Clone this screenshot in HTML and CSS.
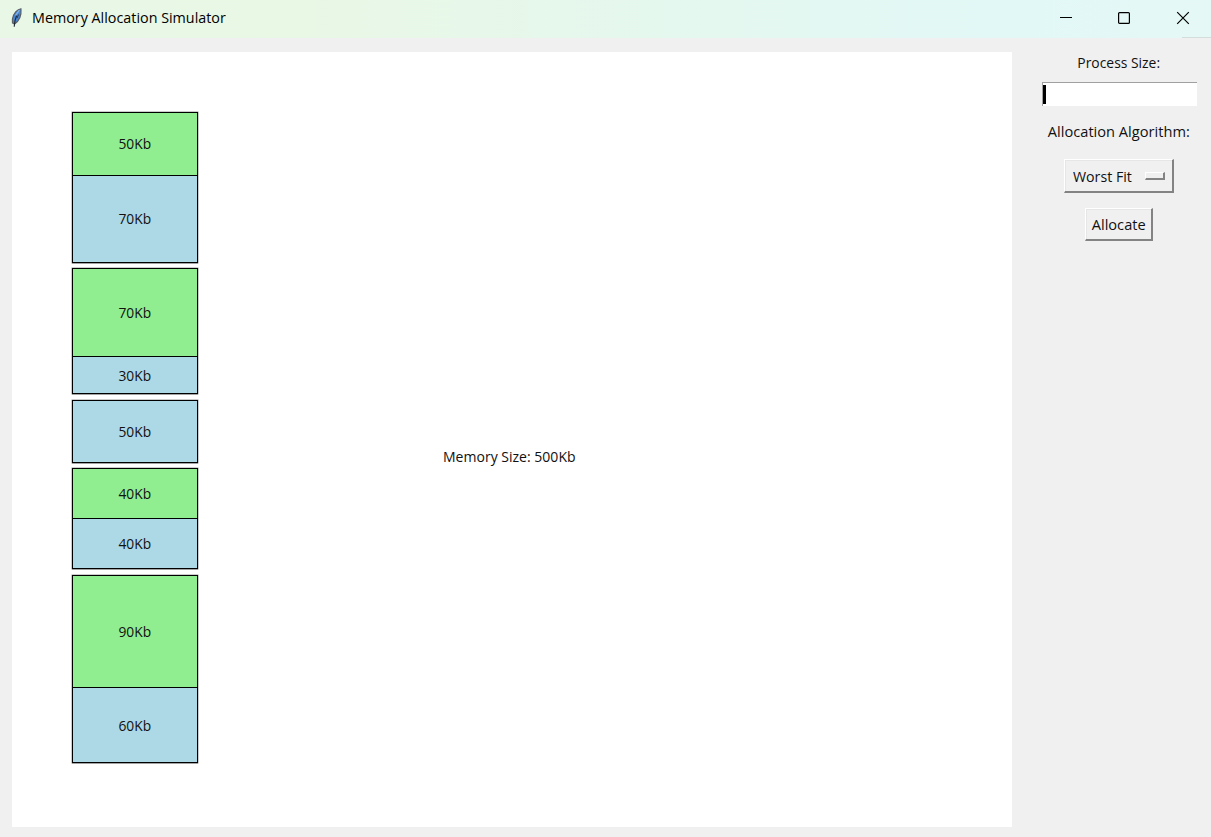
FILE: index.html
```
<!DOCTYPE html>
<html lang="en">
<head>
<meta charset="utf-8">
<title>Memory Allocation Simulator</title>
<link rel="stylesheet" href="styles.css">
</head>
<body>
<div class="window">
  <header class="titlebar">
    <svg class="feather" width="14" height="22" viewBox="0 0 14 22">
      <path d="M11 1.8 C7.5 2 3.2 6.5 2.4 12 L2.4 16 L4.6 17 C9 14 11.6 8 11 1.8Z" fill="#4585d2" stroke="#5a5f62" stroke-width="1.1"/>
      <path d="M6.6 8.5 C5.2 12 4.4 15 4.2 19.8" fill="none" stroke="#222831" stroke-width="1.1"/>
      <path d="M9.4 3.2 L5.6 8.4" fill="none" stroke="#88b4e4" stroke-width="1.2"/>
      <path d="M8.6 7.5 L7 11" fill="none" stroke="#1b3a68" stroke-width="1"/>
    </svg>
    <h1 class="title">Memory Allocation Simulator</h1>
    <div class="controls">
      <svg width="14" height="14" viewBox="0 0 14 14"><path d="M1 6.5H13" stroke="#000" fill="none"/></svg>
      <svg width="14" height="14" viewBox="0 0 14 14"><rect x="1.6" y="1.6" width="10.8" height="10.8" rx="1" stroke="#000" stroke-width="1.2" fill="none"/></svg>
      <svg class="close" width="14" height="14" viewBox="0 0 14 14"><path d="M1.2 1.2L12.8 12.8M12.8 1.2L1.2 12.8" stroke="#000" stroke-width="1.2" fill="none"/></svg>
    </div>
  </header>
  <main class="content">
    <section class="canvas">
      <div class="memory">
        <div class="partition">
          <div class="block used h50"><span class="label">50Kb</span></div>
          <div class="block free h70"><span class="label">70Kb</span></div>
        </div>
        <div class="partition">
          <div class="block used h70"><span class="label">70Kb</span></div>
          <div class="block free h30"><span class="label">30Kb</span></div>
        </div>
        <div class="partition">
          <div class="block free h50"><span class="label">50Kb</span></div>
        </div>
        <div class="partition">
          <div class="block used h40"><span class="label">40Kb</span></div>
          <div class="block free h40"><span class="label">40Kb</span></div>
        </div>
        <div class="partition">
          <div class="block used h90"><span class="label">90Kb</span></div>
          <div class="block free h60"><span class="label">60Kb</span></div>
        </div>
      </div>
      <p class="total">Memory Size: 500Kb</p>
    </section>
    <aside class="panel">
      <div class="caption process">Process Size:</div>
      <div class="entry"><span class="caret"></span></div>
      <div class="caption algorithm">Allocation Algorithm:</div>
      <div class="raised menu"><span class="choice">Worst Fit</span><span class="indicator"></span></div>
      <div class="raised button"><span class="action">Allocate</span></div>
    </aside>
  </main>
</div>
</body>
</html>
```
FILE: styles.css
```
* { box-sizing: border-box; }
body {
  margin: 0;
  background: #f0f0f0;
  color: #111;
  font: 15px/20px "Open Sans", "Noto Sans", sans-serif;
  white-space: nowrap;
}
.window { width: 1211px; height: 837px; display: flex; flex-direction: column; overflow: hidden; }
.titlebar {
  height: 38px;
  display: flex;
  align-items: center;
  padding: 0 21px 2px 10px;
  background:
    linear-gradient(#d5dddb, #d5dddb) right bottom / 29px 1px no-repeat,
    linear-gradient(90deg, #e9f7e7 0%, #e9f7e5 25%, #e4f8f0 60%, #e2f8f7 85%, #e5f8f5 100%);
}
.feather { margin-top: -1px; }
.title {
  margin: -2px auto 0 8px;
  font-size: 15px;
  font-weight: 400;
  color: #000;
  transform: scaleX(0.955);
  transform-origin: left;
}
.controls { display: flex; gap: 44px; }
.close { margin-left: 1px; }
.content { flex: 1; display: flex; }
.canvas {
  width: 1000px;
  height: 775px;
  margin: 14px 0 0 12px;
  padding: 60px;
  background: #fff;
  display: flex;
}
.memory { width: 126px; display: flex; flex-direction: column; gap: 5.25px; }
.partition {
  border: 1px solid #000;
  border-top: 0;
  box-shadow: 0 0 0 .5px rgba(0, 0, 0, .4), 0 1px 0 rgba(0, 0, 0, .2);
}
.block {
  border-top: 1px solid #000;
  display: flex;
  align-items: center;
  justify-content: center;
}
.used { background: #90ee90; }
.free { background: #add8e6; }
.h30 { height: 37.5px; }
.h40 { height: 50px; }
.h50 { height: 62.5px; }
.h60 { height: 75px; }
.h70 { height: 87.5px; }
.h90 { height: 112.5px; }
.label { margin-top: -1px; transform: scaleX(0.92); }
.total { margin: 334px 0 0 245px; height: 20px; transform: scaleX(0.935); transform-origin: left; }
.panel {
  flex: 1;
  padding: 14px 0 0 15px;
  display: flex;
  flex-direction: column;
  align-items: center;
}
.caption { transform: scaleX(0.925); }
.algorithm { transform: scaleX(0.975); }
.entry {
  width: 155px;
  height: 24px;
  margin: 10px 0 15px;
  padding: 2px;
  background: #fff;
  border-top: 1px solid #a0a0a0;
  border-left: 1px solid #a0a0a0;
}
.caret { display: block; width: 3px; height: 19px; margin-left: -2px; background: #000; }
.raised {
  border: solid;
  border-width: 1px 2px 2px 1px;
  border-color: #fff #838383 #838383 #fff;
  box-shadow: inset 1px 1px 0 #e6e6e6;
  display: flex;
  align-items: center;
}
.menu { width: 110px; height: 34px; margin: 18px 0 15px; padding: 1px 7px 0 8px; justify-content: space-between; }
.choice { transform: scaleX(0.945); transform-origin: left; }
.indicator { width: 20px; height: 8px; border: solid; border-width: 1px 2px 2px 1px; border-color: #fff #838383 #838383 #fff; }
.button { width: 68px; height: 33px; justify-content: center; }
.action { transform: scaleX(0.975); }
```
